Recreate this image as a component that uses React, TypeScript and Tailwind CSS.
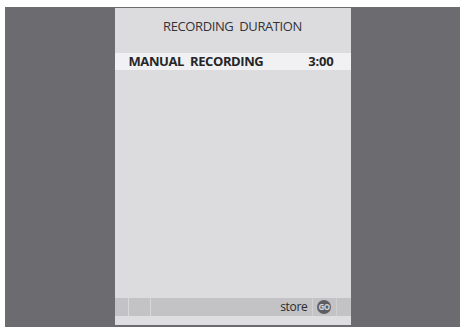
import React from 'react';

const font = { fontFamily: '"Open Sans", "Noto Sans", sans-serif' };

const GoButton = () => (
    <div className="w-[14px] h-[14px] rounded-full bg-[#5e5e62] flex items-center justify-center">
        <span className="text-[8px] leading-none font-bold text-[#d6d6d8] tracking-[-0.5px]">GO</span>
    </div>
);

export default function App() {
    return (
        <div className="w-[465px] h-[329px] bg-white pt-[7px] px-[5px]" style={font}>
            <div className="h-[320px] bg-[#6c6c70] flex justify-center pt-px">
                <div className="w-[236px] h-[317px] bg-[#dcdcdf] flex flex-col">
                    <div className="h-[45px] flex justify-center pt-[11px]">
                        <h1 className="text-[13px] leading-[14px] tracking-[-0.4px] text-[#333336] whitespace-pre">
                            RECORDING  DURATION
                        </h1>
                    </div>
                    <div className="h-[17px] bg-[#f1f1f3] flex items-center justify-between pl-[14px] pr-[17px]">
                        <span className="text-[13px] leading-none font-bold tracking-[-0.4px] text-[#262628] whitespace-pre">
                            MANUAL  RECORDING
                        </span>
                        <span className="text-[13px] leading-none font-bold tracking-[-0.2px] text-[#262628]">3:00</span>
                    </div>
                    <div className="flex-1" />
                    <div className="h-[18px] bg-[#c3c3c6] flex">
                        <div className="w-[14px] border-r border-[#d8d8db]" />
                        <div className="w-[22px] border-r border-[#d8d8db]" />
                        <div className="flex-1 flex items-center justify-end pr-[4px] border-r border-[#d0d0d3]">
                            <span className="text-[12px] leading-none tracking-[-0.3px] text-[#2a2a2c]">store</span>
                        </div>
                        <div className="w-[24px] flex items-center justify-center border-r border-[#d0d0d3]">
                            <GoButton />
                        </div>
                        <div className="w-[14px]" />
                    </div>
                    <div className="h-[9px] bg-[#dedee1]" />
                </div>
            </div>
        </div>
    );
}
